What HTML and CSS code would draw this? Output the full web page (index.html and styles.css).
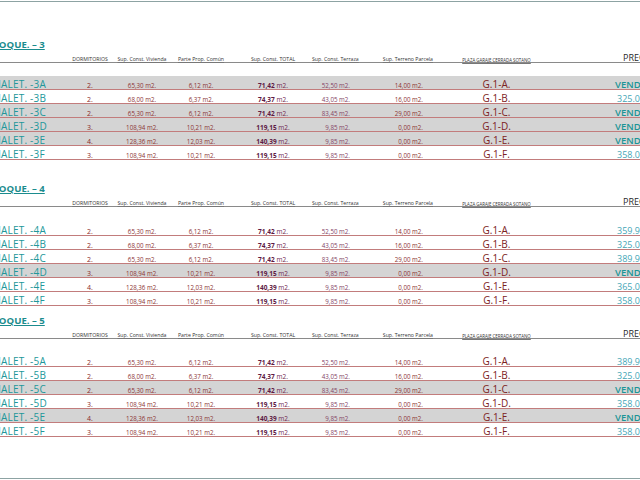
FILE: index.html
```html
<!DOCTYPE html>
<html lang="es">
<head>
<meta charset="utf-8">
<title>Precios chalets</title>
<link rel="stylesheet" href="styles.css">
</head>
<body>
<div class="page">
  <div class="sheet">

    <section class="block block-3">
      <div class="title">BLOQUE. – 3</div>
      <div class="grid head">
        <div></div>
        <div class="h c">DORMITORIOS</div>
        <div class="h c">Sup. Const. Vivienda</div>
        <div class="h c">Parte Prop. Común</div>
        <div class="h c">Sup. Const. TOTAL</div>
        <div class="h r">Sup. Const. Terraza</div>
        <div class="h r">Sup. Terreno Parcela</div>
        <div class="h c plaza">PLAZA GARAJE CERRADA SOTANO</div>
        <div class="h price-h">PRECIO</div>
      </div>
      <div class="rows">
        <div class="grid row sold"><div class="lbl">CHALET. -3A</div><div class="dorm">2.</div><div class="num c">65,30 m2.</div><div class="num c">6,12 m2.</div><div class="tot"><b>71,42</b> m2.</div><div class="terr">52,50 m2.</div><div class="num r2">14,00 m2.</div><div class="gar">G.1-A.</div><div class="sold-t">VENDIDO</div></div>
        <div class="grid row"><div class="lbl">CHALET. -3B</div><div class="dorm">2.</div><div class="num c">68,00 m2.</div><div class="num c">6,37 m2.</div><div class="tot"><b>74,37</b> m2.</div><div class="terr">43,05 m2.</div><div class="num r2">16,00 m2.</div><div class="gar">G.1-B.</div><div class="price">325.000 €</div></div>
        <div class="grid row sold"><div class="lbl">CHALET. -3C</div><div class="dorm">2.</div><div class="num c">65,30 m2.</div><div class="num c">6,12 m2.</div><div class="tot"><b>71,42</b> m2.</div><div class="terr">83,45 m2.</div><div class="num r2">29,00 m2.</div><div class="gar">G.1-C.</div><div class="sold-t">VENDIDO</div></div>
        <div class="grid row sold"><div class="lbl">CHALET. -3D</div><div class="dorm">3.</div><div class="num c">108,94 m2.</div><div class="num c">10,21 m2.</div><div class="tot"><b>119,15</b> m2.</div><div class="terr">9,85 m2.</div><div class="num r2">0,00 m2.</div><div class="gar">G.1-D.</div><div class="sold-t">VENDIDO</div></div>
        <div class="grid row sold"><div class="lbl">CHALET. -3E</div><div class="dorm">4.</div><div class="num c">128,36 m2.</div><div class="num c">12,03 m2.</div><div class="tot"><b>140,39</b> m2.</div><div class="terr">9,85 m2.</div><div class="num r2">0,00 m2.</div><div class="gar">G.1-E.</div><div class="sold-t">VENDIDO</div></div>
        <div class="grid row"><div class="lbl">CHALET. -3F</div><div class="dorm">3.</div><div class="num c">108,94 m2.</div><div class="num c">10,21 m2.</div><div class="tot"><b>119,15</b> m2.</div><div class="terr">9,85 m2.</div><div class="num r2">0,00 m2.</div><div class="gar">G.1-F.</div><div class="price">358.000 €</div></div>
      </div>
    </section>

    <section class="block block-4">
      <div class="title">BLOQUE. – 4</div>
      <div class="grid head">
        <div></div>
        <div class="h c">DORMITORIOS</div>
        <div class="h c">Sup. Const. Vivienda</div>
        <div class="h c">Parte Prop. Común</div>
        <div class="h c">Sup. Const. TOTAL</div>
        <div class="h r">Sup. Const. Terraza</div>
        <div class="h r">Sup. Terreno Parcela</div>
        <div class="h c plaza">PLAZA GARAJE CERRADA SOTANO</div>
        <div class="h price-h">PRECIO</div>
      </div>
      <div class="rows">
        <div class="grid row"><div class="lbl">CHALET. -4A</div><div class="dorm">2.</div><div class="num c">65,30 m2.</div><div class="num c">6,12 m2.</div><div class="tot"><b>71,42</b> m2.</div><div class="terr">52,50 m2.</div><div class="num r2">14,00 m2.</div><div class="gar">G.1-A.</div><div class="price">359.900 €</div></div>
        <div class="grid row"><div class="lbl">CHALET. -4B</div><div class="dorm">2.</div><div class="num c">68,00 m2.</div><div class="num c">6,37 m2.</div><div class="tot"><b>74,37</b> m2.</div><div class="terr">43,05 m2.</div><div class="num r2">16,00 m2.</div><div class="gar">G.1-B.</div><div class="price">325.000 €</div></div>
        <div class="grid row"><div class="lbl">CHALET. -4C</div><div class="dorm">2.</div><div class="num c">65,30 m2.</div><div class="num c">6,12 m2.</div><div class="tot"><b>71,42</b> m2.</div><div class="terr">83,45 m2.</div><div class="num r2">29,00 m2.</div><div class="gar">G.1-C.</div><div class="price">389.900 €</div></div>
        <div class="grid row sold"><div class="lbl">CHALET. -4D</div><div class="dorm">3.</div><div class="num c">108,94 m2.</div><div class="num c">10,21 m2.</div><div class="tot"><b>119,15</b> m2.</div><div class="terr">9,85 m2.</div><div class="num r2">0,00 m2.</div><div class="gar">G.1-D.</div><div class="sold-t">VENDIDO</div></div>
        <div class="grid row"><div class="lbl">CHALET. -4E</div><div class="dorm">4.</div><div class="num c">128,36 m2.</div><div class="num c">12,03 m2.</div><div class="tot"><b>140,39</b> m2.</div><div class="terr">9,85 m2.</div><div class="num r2">0,00 m2.</div><div class="gar">G.1-E.</div><div class="price">365.000 €</div></div>
        <div class="grid row"><div class="lbl">CHALET. -4F</div><div class="dorm">3.</div><div class="num c">108,94 m2.</div><div class="num c">10,21 m2.</div><div class="tot"><b>119,15</b> m2.</div><div class="terr">9,85 m2.</div><div class="num r2">0,00 m2.</div><div class="gar">G.1-F.</div><div class="price">358.000 €</div></div>
      </div>
    </section>

    <section class="block block-5">
      <div class="title">BLOQUE. – 5</div>
      <div class="grid head">
        <div></div>
        <div class="h c">DORMITORIOS</div>
        <div class="h c">Sup. Const. Vivienda</div>
        <div class="h c">Parte Prop. Común</div>
        <div class="h c">Sup. Const. TOTAL</div>
        <div class="h r">Sup. Const. Terraza</div>
        <div class="h r">Sup. Terreno Parcela</div>
        <div class="h c plaza">PLAZA GARAJE CERRADA SOTANO</div>
        <div class="h price-h">PRECIO</div>
      </div>
      <div class="rows">
        <div class="grid row"><div class="lbl">CHALET. -5A</div><div class="dorm">2.</div><div class="num c">65,30 m2.</div><div class="num c">6,12 m2.</div><div class="tot"><b>71,42</b> m2.</div><div class="terr">52,50 m2.</div><div class="num r2">14,00 m2.</div><div class="gar">G.1-A.</div><div class="price">389.900 €</div></div>
        <div class="grid row"><div class="lbl">CHALET. -5B</div><div class="dorm">2.</div><div class="num c">68,00 m2.</div><div class="num c">6,37 m2.</div><div class="tot"><b>74,37</b> m2.</div><div class="terr">43,05 m2.</div><div class="num r2">16,00 m2.</div><div class="gar">G.1-B.</div><div class="price">325.000 €</div></div>
        <div class="grid row sold"><div class="lbl">CHALET. -5C</div><div class="dorm">2.</div><div class="num c">65,30 m2.</div><div class="num c">6,12 m2.</div><div class="tot"><b>71,42</b> m2.</div><div class="terr">83,45 m2.</div><div class="num r2">29,00 m2.</div><div class="gar">G.1-C.</div><div class="sold-t">VENDIDO</div></div>
        <div class="grid row"><div class="lbl">CHALET. -5D</div><div class="dorm">3.</div><div class="num c">108,94 m2.</div><div class="num c">10,21 m2.</div><div class="tot"><b>119,15</b> m2.</div><div class="terr">9,85 m2.</div><div class="num r2">0,00 m2.</div><div class="gar">G.1-D.</div><div class="price">358.000 €</div></div>
        <div class="grid row sold"><div class="lbl">CHALET. -5E</div><div class="dorm">4.</div><div class="num c">128,36 m2.</div><div class="num c">12,03 m2.</div><div class="tot"><b>140,39</b> m2.</div><div class="terr">9,85 m2.</div><div class="num r2">0,00 m2.</div><div class="gar">G.1-E.</div><div class="sold-t">VENDIDO</div></div>
        <div class="grid row"><div class="lbl">CHALET. -5F</div><div class="dorm">3.</div><div class="num c">108,94 m2.</div><div class="num c">10,21 m2.</div><div class="tot"><b>119,15</b> m2.</div><div class="terr">9,85 m2.</div><div class="num r2">0,00 m2.</div><div class="gar">G.1-F.</div><div class="price">358.000 €</div></div>
      </div>
    </section>

  </div>
</div>
</body>
</html>
```

FILE: styles.css
```css
html, body {
  margin: 0;
  padding: 0;
  overflow: hidden;
  background: #ffffff;
}

body {
  font-family: "Open Sans", "Noto Sans", sans-serif;
  width: 640px;
  height: 480px;
}

.page {
  margin-top: 1px;
  height: 476px;
  border-top: 1px solid #8da3a3;
  border-bottom: 1px solid #8da3a3;
  overflow: hidden;
}

.sheet {
  margin-left: -14px;
  width: 714px;
}

.block-3 { margin-top: 36px; }
.block-4 { margin-top: 22px; }
.block-5 { margin-top: 8px; }

.title {
  height: 14px;
  line-height: 14px;
  font-size: 9.6px;
  font-weight: 700;
  color: #1b8c8e;
  text-decoration: underline;
  text-underline-offset: 1px;
  white-space: nowrap;
  padding-left: 1px;
}

.grid {
  display: grid;
  grid-template-columns: 78px 52px 52px 66px 78px 46px 75px 127px 140px;
  align-items: end;
}

.head {
  height: 10px;
  border-bottom: 1px solid #8a8a8a;
}

.h {
  font-size: 5.2px;
  line-height: 1;
  color: #333333;
  white-space: nowrap;
  text-decoration: underline;
  text-decoration-color: #777777;
}

.h.c { text-align: center; }
.h.r { text-align: right; }
.h.plaza { font-size: 4.4px; }

.h.price-h {
  font-size: 9px;
  color: #2a2a2a;
  padding-left: 63px;
  text-decoration: none;
}

.rows { margin-top: 13px; }
.block-4 .rows { margin-top: 15px; }
.block-5 .rows { margin-top: 14px; }

.row {
  height: 13px;
  border-bottom: 1px solid #c27c7c;
  white-space: nowrap;
  line-height: 1;
}

.row.sold { background: #d4d4d4; }

.lbl {
  font-size: 10px;
  color: #22979a;
  letter-spacing: 0.2px;
  padding-left: 1px;
}

.dorm {
  font-size: 7px;
  color: #8a2b2b;
  text-align: center;
}

.num {
  font-size: 6.2px;
  color: #8c3434;
}

.num.c { text-align: center; }
.num.r2 { text-align: right; padding-right: 10px; }

.tot {
  font-size: 6.5px;
  color: #6e2650;
  text-align: center;
}

.tot b { font-weight: 700; color: #5e1a44; }

.terr {
  font-size: 6.2px;
  color: #844466;
  text-align: right;
  padding-right: 8px;
}

.gar {
  font-size: 10px;
  color: #7c2222;
  text-align: center;
}

.sold-t {
  font-size: 9.5px;
  font-weight: 600;
  color: #1b9596;
  padding-left: 55px;
}

.price {
  font-size: 9px;
  color: #45a6b6;
  padding-left: 57px;
}
```
